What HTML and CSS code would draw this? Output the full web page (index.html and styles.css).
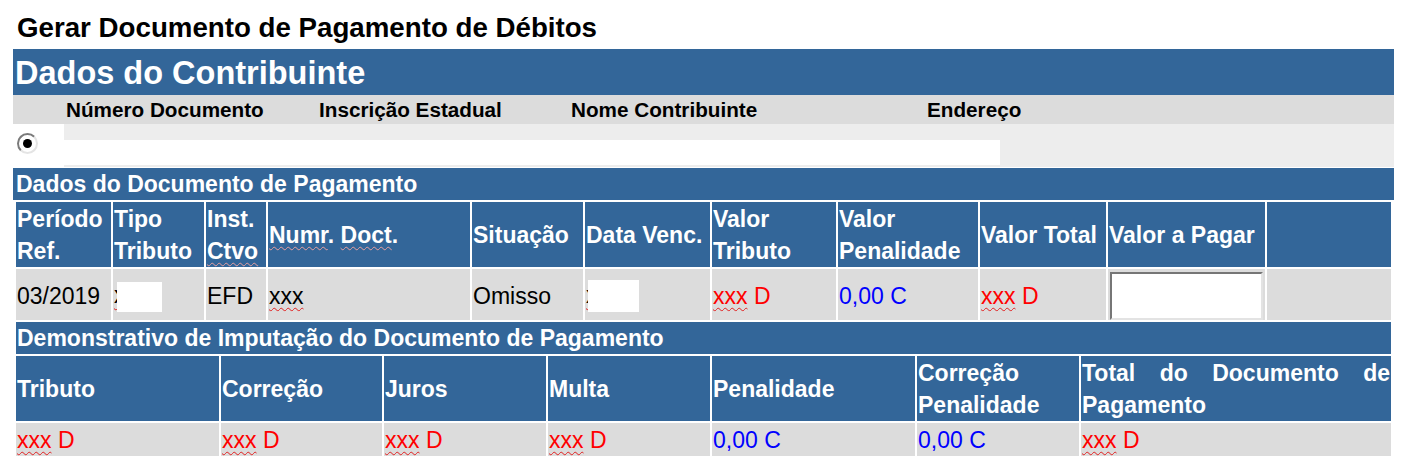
FILE: index.html
```html
<html lang="pt-BR"><head>
    <meta charset="UTF-8">
    <meta name="viewport" content="width=device-width, initial-scale=1.0">
    <title>Gerar Documento de Pagamento de Débitos</title>
    <link rel="stylesheet" href="styles.css">
</head>
<body>
    <h1 class="page-title">Gerar Documento de Pagamento de Débitos</h1>

    <!-- Contribuinte -->
    <div class="contribuinte">
        <div class="bar bar-big">Dados do Contribuinte</div>
        <div class="contrib-grid">
            <div class="ch"></div>
            <div class="ch">Número Documento</div>
            <div class="ch">Inscrição Estadual</div>
            <div class="ch">Nome Contribuinte</div>
            <div class="ch">Endereço</div>
            <div class="radio-cell"><span class="radio"></span></div>
            <div class="contrib-data"><div class="blank"></div></div>
        </div>
        <div class="bar bar-doc">Dados do Documento de Pagamento</div>
    </div>

    <!-- Documento de pagamento -->
    <div class="doc">
        <div class="doc-grid">
            <div class="th"><span>Período Ref.</span></div>
            <div class="th"><span>Tipo Tributo</span></div>
            <div class="th"><span>Inst. <span class="sp sp-light">Ctvo</span></span></div>
            <div class="th"><span><span class="sp sp-light">Numr</span>. <span class="sp sp-light">Doct</span>.</span></div>
            <div class="th"><span>Situação</span></div>
            <div class="th"><span>Data Venc.</span></div>
            <div class="th"><span>Valor Tributo</span></div>
            <div class="th"><span>Valor Penalidade</span></div>
            <div class="th"><span>Valor Total</span></div>
            <div class="th"><span>Valor a Pagar</span></div>
            <div class="th"></div>

            <div class="td"><span>03/2019</span></div>
            <div class="td"><span><span class="sp">x</span><span class="redact redact-tipo"></span></span></div>
            <div class="td"><span>EFD</span></div>
            <div class="td"><span><span class="sp">xxx</span></span></div>
            <div class="td"><span>Omisso</span></div>
            <div class="td"><span><span class="sp">x</span><span class="redact redact-data"></span></span></div>
            <div class="td debit"><span><span class="sp">xxx</span> D</span></div>
            <div class="td credit"><span>0,00 C</span></div>
            <div class="td debit"><span><span class="sp">xxx</span> D</span></div>
            <div class="td"><input type="text" class="pay-input"></div>
            <div class="td"></div>
        </div>

        <div class="bar bar-sub">Demonstrativo de Imputação do Documento de Pagamento</div>

        <div class="imp-grid">
            <div class="th"><span>Tributo</span></div>
            <div class="th"><span>Correção</span></div>
            <div class="th"><span>Juros</span></div>
            <div class="th"><span>Multa</span></div>
            <div class="th"><span>Penalidade</span></div>
            <div class="th"><span>Correção Penalidade</span></div>
            <div class="th th-justify">Total do Documento de Pagamento</div>

            <div class="td debit"><span><span class="sp">xxx</span> D</span></div>
            <div class="td debit"><span><span class="sp">xxx</span> D</span></div>
            <div class="td debit"><span><span class="sp">xxx</span> D</span></div>
            <div class="td debit"><span><span class="sp">xxx</span> D</span></div>
            <div class="td credit"><span>0,00 C</span></div>
            <div class="td credit"><span>0,00 C</span></div>
            <div class="td debit"><span><span class="sp">xxx</span> D</span></div>
        </div>
    </div>
</body></html>
```

FILE: styles.css
```css
body {
    font-family: "Liberation Sans", Arial, sans-serif;
    margin: 0;
    padding: 0;
    background-color: #fff;
    color: #000;
}
.page-title {
    margin: 0;
    padding: 13px 0 0 17px;
    font-size: 27.7px;
    font-weight: bold;
    line-height: 30px;
}

/* blue title bars */
.bar {
    background-color: #336699;
    color: #fff;
    font-weight: bold;
    box-sizing: border-box;
}
.bar-big {
    height: 46px;
    padding: 2px 0 0 2px;
    font-size: 32.5px;
    line-height: 44px;
}
.bar-doc {
    height: 32px;
    margin-top: 1px;
    padding-left: 3px;
    font-size: 23px;
    line-height: 32px;
}
.bar-sub {
    height: 32px;
    padding-left: 1px;
    font-size: 23px;
    line-height: 32px;
}

/* contribuinte */
.contribuinte {
    margin: 6px 0 0 13px;
    width: 1381px;
}
.contrib-grid {
    display: grid;
    grid-template-columns: 51px 253px 252px 356px 1fr;
}
.ch {
    height: 29px;
    padding-left: 2px;
    background-color: #dcdcdc;
    font-size: 20.7px;
    font-weight: bold;
    line-height: 29px;
    white-space: nowrap;
}
.radio-cell {
    height: 43px;
    padding: 9px 0 0 4px;
    box-sizing: border-box;
    background-color: #fff;
}
.radio {
    display: block;
    width: 21px;
    height: 21px;
    box-sizing: border-box;
    border: 2px solid;
    border-color: #7a7a7a #e4e4e4 #e4e4e4 #7a7a7a;
    border-radius: 50%;
    background-color: #fff;
    position: relative;
}
.radio::after {
    content: "";
    position: absolute;
    left: 4px;
    top: 4px;
    width: 9px;
    height: 9px;
    border-radius: 50%;
    background-color: #000;
}
.contrib-data {
    grid-column: span 4;
    height: 43px;
    padding-top: 16px;
    box-sizing: border-box;
    background-color: #ededed;
}
.blank {
    width: 936px;
    height: 25px;
    background-color: #fff;
}

/* documento tables */
.doc {
    margin-left: 16px;
    width: 1375px;
    padding-top: 2px;
    display: flex;
    flex-direction: column;
    gap: 2px;
}
.doc-grid,
.imp-grid {
    display: grid;
    gap: 2px;
}
.doc-grid {
    grid-template-columns: 95px 91px 60px 202px 111px 125px 124px 140px 126px 157px 124px;
    grid-template-rows: 65px 51px;
}
.imp-grid {
    grid-template-columns: 203px 161px 162px 162px 203px 162px 310px;
    grid-template-rows: 65px 33px;
}
.th {
    display: flex;
    align-items: center;
    padding: 1px 1px 0;
    background-color: #336699;
    color: #fff;
    font-size: 23px;
    font-weight: bold;
    line-height: 32px;
}
.th-justify {
    display: block;
    text-align: justify;
}
.td {
    display: flex;
    align-items: center;
    padding: 2px 1px 0;
    background-color: #dcdcdc;
    font-size: 23px;
    line-height: 32px;
    white-space: nowrap;
}
.imp-grid .td {
    align-items: flex-start;
    padding-top: 1px;
}
.debit {
    color: #ff0000;
}
.credit {
    color: #0000ff;
}

/* spell check squiggle */
.sp {
    text-decoration: underline wavy #e02020;
    text-decoration-thickness: 1px;
    text-underline-offset: 3px;
}
.sp-light {
    text-decoration-color: #e8a0a0;
}

/* hidden values */
.redact {
    display: inline-block;
    vertical-align: middle;
    background-color: #fff;
}
.redact-tipo {
    width: 45px;
    height: 30px;
    margin-left: -9px;
}
.redact-data {
    width: 51px;
    height: 32px;
    margin-left: -10px;
}

.pay-input {
    width: 153px;
    height: 48px;
    margin: 0 0 0 1px;
    box-sizing: border-box;
    border: 2px solid;
    border-color: #767676 #e3e3e3 #e3e3e3 #767676;
    background-color: #fff;
    padding: 0;
}
```
